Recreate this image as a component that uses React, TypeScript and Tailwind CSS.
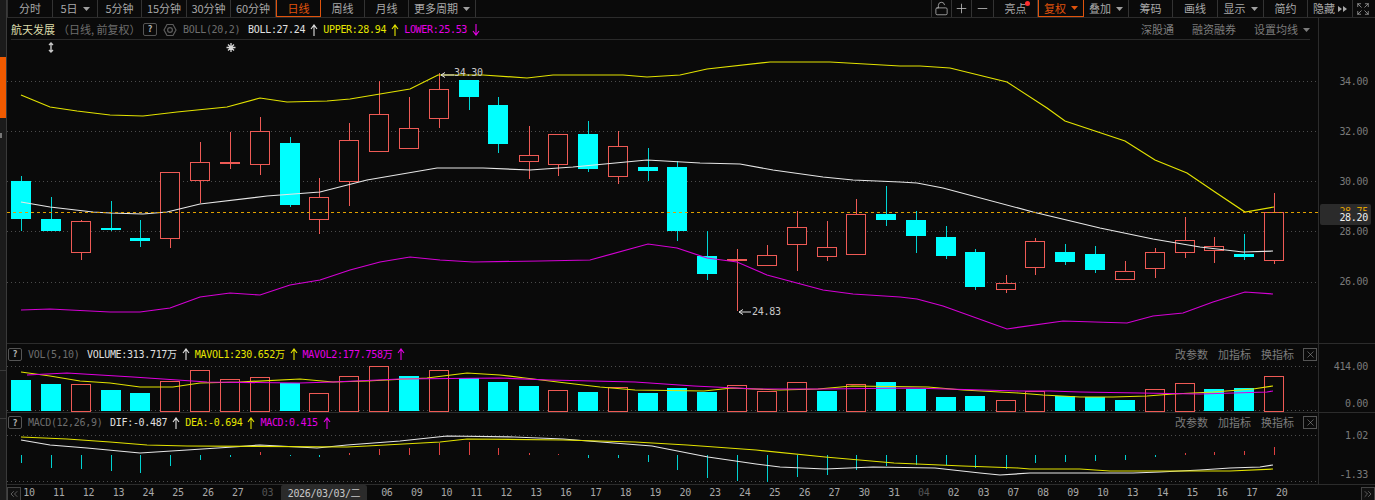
import { ChevronsLeft, ChevronsRight, Expand, LockOpen, Minus, Plus, X } from "lucide-react";

const CJK = "font-['Noto_Sans_CJK_SC','Noto_Sans',sans-serif]";
const MONO = "font-['DejaVu_Sans_Mono','Noto_Sans_CJK_SC',monospace] tracking-[-0.3px]";

const CYAN = "#00ffff";
const CYAN_DIM = "#00d4d4";
const RED = "#ee5a55";
const YELLOW = "#e2e200";
const WHITE = "#e6e6e6";
const MAGENTA = "#d400d4";

// x, body top, body bottom, wick top, wick bottom, up
type Candle = [number, number, number, number, number, boolean];
const candles: Candle[] = [
  [21, 181, 219, 176, 231, false],
  [51, 219, 231, 197, 231, false],
  [81, 221, 252, 220, 260, true],
  [111, 228, 229, 201, 231, false],
  [140, 238, 241, 220, 247, false],
  [170, 172, 238, 172, 248, true],
  [200, 162, 180, 142, 203, true],
  [230, 162, 163, 132, 169, true],
  [260, 131, 164, 117, 175, true],
  [290, 143, 205, 137, 207, false],
  [319, 197, 219, 178, 234, true],
  [349, 140, 181, 123, 206, true],
  [379, 114, 151, 81, 151, true],
  [409, 128, 148, 97, 148, true],
  [439, 89, 118, 73, 128, true],
  [469, 80, 97, 80, 110, false],
  [498, 105, 144, 97, 153, false],
  [529, 155, 161, 126, 179, true],
  [558, 134, 164, 134, 176, true],
  [588, 134, 169, 121, 172, false],
  [618, 146, 176, 131, 184, true],
  [648, 167, 171, 148, 181, false],
  [677, 167, 231, 161, 241, false],
  [707, 256, 274, 231, 280, false],
  [737, 259, 260, 249, 311, true],
  [767, 255, 265, 245, 265, true],
  [797, 227, 244, 211, 271, true],
  [827, 247, 256, 221, 261, true],
  [856, 214, 254, 199, 254, true],
  [886, 214, 220, 186, 226, false],
  [916, 220, 236, 211, 253, false],
  [946, 237, 256, 226, 259, false],
  [975, 252, 287, 249, 290, false],
  [1006, 283, 289, 275, 293, true],
  [1035, 241, 267, 238, 275, true],
  [1065, 252, 262, 244, 265, false],
  [1095, 254, 270, 246, 273, false],
  [1125, 271, 279, 261, 279, true],
  [1155, 252, 268, 248, 278, true],
  [1185, 240, 252, 217, 258, true],
  [1214, 246, 250, 237, 263, true],
  [1244, 254, 257, 234, 260, false],
  [1274, 212, 260, 193, 264, true],
];

const upperBand =
  "21,95 50,107 77,111 110,115 143,116 177,112 227,107 260,98 287,102 327,101 350,99 410,89 438,75 483,75 527,78 553,75 623,75 647,77 680,75 707,69 770,62 830,62 900,66 920,66 950,68 1007,82 1047,108 1065,121 1095,131 1125,141 1155,160 1187,173 1215,192 1245,212 1274,207";
const midBand =
  "21,202 50,207 93,212 110,213 143,214 167,212 200,204 267,196 320,192 367,180 437,168 483,168 530,170 573,167 647,160 700,163 740,164 773,170 823,177 853,180 900,182 917,183 943,188 1033,212 1100,228 1153,239 1200,247 1243,252 1273,251";
const lowerBand =
  "21,310 50,309 110,312 140,312 170,308 200,297 230,293 260,295 290,285 320,280 350,270 380,262 410,257 440,260 473,262 540,261 590,260 648,244 677,248 707,258 737,262 767,275 823,290 853,294 900,297 917,299 943,306 1007,329 1063,321 1127,323 1153,316 1183,313 1213,302 1245,292 1273,294";

const volTops = [
  380, 384, 384, 390, 393, 381, 370, 379, 377, 383, 393, 376, 366, 376, 370, 378, 382, 386, 390, 392, 387, 393,
  388, 392, 385, 391, 382, 391, 384, 382, 389, 397, 396, 400, 391, 396, 397, 400, 389, 383, 389, 388, 376,
];
// volume colours do not always follow the candle body
const volUp = [2, 5, 6, 7, 8, 10, 11, 12, 14, 18, 20, 24, 25, 26, 28, 33, 34, 38, 39, 42];
const vol1 =
  "21,372 50,376 80,381 110,383 140,387 173,387 200,383 240,382 300,379 333,382 367,381 427,378 467,373 500,375 525,378 566,383 600,387 635,390 704,391 732,388 780,390 818,389 852,386 928,387 963,390 1018,393 1043,395 1080,397 1113,397 1147,396 1173,394 1213,392 1253,389 1273,386";
const vol2 =
  "27,375 67,373 133,377 207,382 300,383 333,382 400,379 500,378 549,380 635,382 694,386 756,389 825,389 911,388 1018,391 1050,391 1080,392 1140,393 1200,394 1267,392 1273,391";

// bottom end of each MACD bar, bars above zero end at the zero line and start here instead
const macdEnds = [
  463, 468, 469, 471, 473, 466, 460, 457, 452, 456, 457, 453, 449, 448, 443, 442, 448, 453, 454, 458, 458, 462, 470,
  478, 481, 482, 477, 475, 470, 466, 465, 465, 468, 469, 463, 462, 461, 460, 457, 453, 452, 451, 447,
];
const macdUp = [8, 11, 12, 13, 14, 15, 16, 17, 18, 39, 40, 41, 42];
const dif =
  "21,440 50,445 87,448 140,453 187,450 233,447 260,445 317,448 347,445 400,441 447,436 514,437 563,439 601,442 652,446 708,457 756,464 780,467 825,469 873,467 935,468 980,473 1000,475 1030,473 1110,473 1133,473 1160,472 1200,470 1230,468 1260,467 1273,465";
const dea =
  "21,437 67,439 110,442 147,445 187,446 347,447 367,446 440,442 467,439 563,440 635,442 687,445 756,450 825,457 894,463 963,466 1018,468 1030,469 1080,469 1110,471 1230,471 1273,469";

const axisLabels = [
  "10", "11", "12", "13", "24", "25", "26", "27", "03", "", "", "", "06", "09", "10", "11", "12", "13", "16", "17", "18",
  "19", "20", "23", "24", "25", "26", "27", "30", "31", "04", "02", "03", "07", "08", "09", "10", "13", "14", "15", "16",
  "17", "20",
];

const leftTabs = [
  { label: "分时", w: "w-[45px]" },
  { label: "5日", w: "w-[45px]", caret: true },
  { label: "5分钟", w: "w-[44px]" },
  { label: "15分钟", w: "w-[45px]" },
  { label: "30分钟", w: "w-[44px]" },
  { label: "60分钟", w: "w-[45px]" },
  { label: "日线", w: "w-[45px]", active: true },
  { label: "周线", w: "w-[44px]" },
  { label: "月线", w: "w-[44px]" },
  { label: "更多周期", w: "w-[67px]", caret: true },
];

const rightTabs = [
  { label: "亮点", w: "w-[44px]", dot: true },
  { label: "复权", w: "w-[46px]", caret: true, active: true },
  { label: "叠加", w: "w-[45px]", caret: true },
  { label: "筹码", w: "w-[44px]" },
  { label: "画线", w: "w-[45px]" },
  { label: "显示", w: "w-[46px]", caret: true },
  { label: "简约", w: "w-[44px]" },
];

function Caret({ color = "#a0a0a0" }: { color?: string }) {
  return (
    <svg width="7" height="4" viewBox="0 0 7 4" className="ml-[5px] shrink-0">
      <path d="M0 0H7L3.5 4Z" fill={color} />
    </svg>
  );
}

function Tab({ label, w, caret, active, dot }: { label: string; w: string; caret?: boolean; active?: boolean; dot?: boolean }) {
  return (
    <div
      className={`relative flex h-[17px] items-center justify-center border-r text-[11px] ${w} ${
        active ? "border border-t-0 border-[#e0530c] text-[#e0530c]" : "border-[#333333] text-[#a8a8a8]"
      }`}
    >
      {label}
      {caret && <Caret color={active ? "#e0530c" : "#a0a0a0"} />}
      {dot && <span className="absolute right-[7px] top-[1px] h-[5px] w-[5px] rounded-full bg-[#ff3030]" />}
    </div>
  );
}

function Arrow({ color, down }: { color: string; down?: boolean }) {
  return (
    <svg width="8" height="12" viewBox="0 0 8 12" className={`mx-[5px] shrink-0 ${down ? "rotate-180" : ""}`}>
      <path d="M4 12V1M1 5L4 1L7 5" fill="none" stroke={color} strokeWidth="1.1" />
    </svg>
  );
}

function Help() {
  return (
    <span className="flex h-[13px] w-[14px] shrink-0 items-center justify-center rounded-[2px] border border-[#555555] text-[9px] font-bold text-[#b0b0b0]">
      ?
    </span>
  );
}

function Gear() {
  return (
    <svg width="14" height="14" viewBox="0 0 14 14" className="shrink-0">
      <path d="M4 1.5H10L13 7L10 12.5H4L1 7Z" fill="none" stroke="#5c5c5c" strokeWidth="1.2" />
      <circle cx="7" cy="7" r="2.4" fill="none" stroke="#5c5c5c" strokeWidth="1.2" />
    </svg>
  );
}

function Reading({ text, color, down }: { text: string; color: string; down?: boolean }) {
  return (
    <span className="flex items-center" style={{ color }}>
      <span className={`${MONO} text-[10px]`}>{text}</span>
      <Arrow color={color} down={down} />
    </span>
  );
}

function PanelActions() {
  return (
    <div className={`flex items-center gap-[10px] text-[11px] text-[#7c7c7c] ${CJK}`}>
      <span>改参数</span>
      <span>加指标</span>
      <span>换指标</span>
      <span className="ml-[-1px] flex h-[13px] w-[14px] items-center justify-center border border-[#555555]">
        <X size={11} strokeWidth={1.2} color="#9a9a9a" />
      </span>
    </div>
  );
}

function Dots({ y, x2 = 1320 }: { y: number; x2?: number }) {
  return <line x1="7" x2={x2} y1={y + 0.5} y2={y + 0.5} stroke="#4c4c4c" strokeDasharray="1 3" />;
}

function Line({ points, color }: { points: string; color: string }) {
  return <polyline points={points} fill="none" stroke={color} strokeWidth="1.2" />;
}

function Body({ x, top, bottom, up }: { x: number; top: number; bottom: number; up: boolean }) {
  if (up) return <rect x={x - 9.5} y={top + 0.5} width="19" height={Math.max(bottom - top, 1)} fill="#0a0a0a" stroke={RED} />;
  return <rect x={x - 10} y={top} width="20" height={Math.max(bottom - top, 2)} fill={CYAN} />;
}

function MainChart() {
  return (
    <svg width="1312" height="303" viewBox="7 40 1312 303" className="block">
      {[81, 131, 181, 231, 282].map((y) => (
        <Dots key={y} y={y} />
      ))}
      {candles.map(([x, top, bottom, wickTop, wickBottom, up]) => (
        <g key={x} shapeRendering="crispEdges">
          <line x1={x + 0.5} x2={x + 0.5} y1={wickTop} y2={wickBottom} stroke={up ? RED : CYAN_DIM} />
          <Body x={x} top={top} bottom={bottom} up={up} />
        </g>
      ))}
      <Line points={upperBand} color={YELLOW} />
      <Line points={midBand} color={WHITE} />
      <Line points={lowerBand} color={MAGENTA} />
      <line x1="7" x2="1320" y1="212.5" y2="212.5" stroke="#e0a000" strokeDasharray="3 3" shapeRendering="crispEdges" />

      <path d="M441 75H454M441 75L445 72.5M441 75L445 77.5" fill="none" stroke="#e0e0e0" />
      <text x="454" y="76" fontSize="10" fill="#c8c8c8" className={MONO}>
        34.30
      </text>
      <path d="M739 312H751M739 312L743 309.5M739 312L743 314.5" fill="none" stroke="#e0e0e0" />
      <text x="752" y="315" fontSize="10" fill="#c8c8c8" className={MONO}>
        24.83
      </text>

      <path d="M51 43V52M49 45L51 43L53 45M49 50L51 52L53 50" fill="none" stroke="#c8c8c8" strokeWidth="1.4" />
      <path d="M231 43V52M226.5 47.5H235.5M228 44.5L234 50.5M234 44.5L228 50.5" fill="none" stroke="#d8d8d8" strokeWidth="1.3" />
    </svg>
  );
}

function VolumeChart() {
  return (
    <svg width="1312" height="48" viewBox="7 364 1312 48" className="block">
      <Dots y={366} />
      <Dots y={410} />
      {candles.map(([x], i) => (
        <g key={x} shapeRendering="crispEdges">
          {volUp.includes(i) ? (
            <rect x={x - 9.5} y={volTops[i] + 0.5} width="19" height={410.5 - volTops[i]} fill="#0a0a0a" stroke={RED} />
          ) : (
            <rect x={x - 10} y={volTops[i]} width="20" height={411 - volTops[i]} fill={CYAN} />
          )}
        </g>
      ))}
      <Line points={vol1} color={YELLOW} />
      <Line points={vol2} color="#e000e0" />
    </svg>
  );
}

function MacdChart() {
  const zero = 455;
  return (
    <svg width="1312" height="52" viewBox="7 432 1312 52" className="block">
      <Dots y={435} />
      <Dots y={481} />
      {candles.map(([x], i) => {
        const up = macdUp.includes(i);
        return (
          <line
            key={x}
            x1={x + 0.5}
            x2={x + 0.5}
            y1={up ? macdEnds[i] : zero}
            y2={up ? zero : macdEnds[i]}
            stroke={up ? "#e04040" : "#00d0d0"}
            strokeWidth="1"
            shapeRendering="crispEdges"
          />
        );
      })}
      <Line points={dif} color={WHITE} />
      <Line points={dea} color={YELLOW} />
    </svg>
  );
}

function AxisValue({ children, className = "" }: { children: string; className?: string }) {
  return <div className={`${MONO} text-right text-[10px] text-[#7a7a7a] ${className}`}>{children}</div>;
}

export default function App() {
  return (
    <div className={`flex h-[500px] w-[1375px] overflow-hidden bg-[#0a0a0a] ${CJK}`}>
      <aside className="flex h-full w-[7px] shrink-0 flex-col border-r border-[#3a3a3a] bg-[#1b1b1b]">
        <div className="mt-[57px] h-[61px] w-[6px] bg-[#f05a00]" />
        <div className="mt-[15px] h-[5px] w-[2px] bg-[#777777]" />
        <div className="mt-[232px] h-px w-full bg-[#3a3a3a]" />
        <div className="mt-[47px] h-px w-full bg-[#3a3a3a]" />
      </aside>

      <div className="flex w-[1368px] flex-col">
        <header className="flex h-[18px] shrink-0 items-start justify-between border-b border-[#2c2c2c] pr-[2px]">
          <nav className="flex border-l border-[#333333]">
            {leftTabs.map((tab) => (
              <Tab key={tab.label} {...tab} />
            ))}
          </nav>
          <nav className="flex border-l border-[#333333]">
            <div className="flex h-[17px] w-[20px] items-center justify-center border-r border-[#333333]">
              <LockOpen size={15} strokeWidth={1.3} color="#b4b4b4" />
            </div>
            <div className="flex h-[17px] w-[20px] items-center justify-center border-r border-[#333333]">
              <Plus size={15} strokeWidth={1.3} color="#c0c0c0" />
            </div>
            <div className="flex h-[17px] w-[22px] items-center justify-center border-r border-[#333333]">
              <Minus size={15} strokeWidth={1.3} color="#c0c0c0" />
            </div>
            {rightTabs.map((tab) => (
              <Tab key={tab.label} {...tab} />
            ))}
            <div className="flex h-[17px] w-[45px] items-center justify-center gap-[3px] border-r border-[#333333] text-[11px] text-[#a8a8a8]">
              隐藏
              <svg width="9" height="6" viewBox="0 0 9 6">
                <path d="M0 0L4 3L0 6ZM5 0L9 3L5 6Z" fill="#a8a8a8" />
              </svg>
            </div>
            <div className="flex h-[17px] w-[20px] items-center justify-center">
              <Expand size={14} strokeWidth={1.2} color="#b4b4b4" />
            </div>
          </nav>
        </header>

        <section className="flex h-[325px] shrink-0">
          <div className="w-[1312px] border-r border-[#2c2c2c]">
            <div className="mx-[4px] flex h-[22px] w-[1299px] items-center border-b border-[#2a2a2a] pt-[2px]">
              <span className="text-[11px] text-[#dcdcaa]">航天发展</span>
              <span className="ml-[3px] w-[79px] whitespace-nowrap text-[11px] text-[#6e6e6e]">（日线, 前复权）</span>
              <span className="ml-[6px] flex gap-[6px]">
                <Help />
                <Gear />
              </span>
              <span className={`${MONO} ml-[6px] w-[65px] text-[10px] text-[#6e6e6e]`}>BOLL(20,2)</span>
              <Reading text="BOLL:27.24" color="#e0e0e0" />
              <Reading text="UPPER:28.94" color="#e6e600" />
              <Reading text="LOWER:25.53" color="#e600e6" down />
              <span className="ml-auto flex items-center gap-[18px] text-[11px] text-[#7c7c7c]">
                <span>深股通</span>
                <span>融资融券</span>
                <span className="flex items-center">
                  设置均线
                  <Caret color="#7c7c7c" />
                </span>
              </span>
            </div>
            <MainChart />
          </div>
          <div className="relative w-[56px] pr-[7px] pt-[39px]">
            {["34.00", "32.00", "30.00", "28.00", "26.00"].map((v) => (
              <AxisValue key={v} className="h-[50px] leading-[50px]">
                {v}
              </AxisValue>
            ))}
            <div className={`${MONO} absolute left-[1px] top-[186px] h-[21px] w-[51px] rounded-[2px] bg-[#2b2b2b] pr-[3px] text-right text-[10px]`}>
              <div className="h-[7px] overflow-hidden pt-[3px] leading-[10px] text-[#e0a000]">28.75</div>
              <div className="mt-[1px] leading-[12px] text-[#f0f0f0]">28.20</div>
            </div>
          </div>
        </section>

        <section className="flex h-[69px] shrink-0 border-t border-[#2c2c2c]">
          <div className="w-[1312px] border-r border-[#2c2c2c]">
            <div className="flex h-[20px] items-center pl-px pr-[1px]">
              <Help />
              <span className={`${MONO} ml-[6px] w-[59px] text-[10px] text-[#6e6e6e]`}>VOL(5,10)</span>
              <Reading text="VOLUME:313.717万" color="#e0e0e0" />
              <Reading text="MAVOL1:230.652万" color="#e6e600" />
              <Reading text="MAVOL2:177.758万" color="#e600e6" />
              <span className="ml-auto">
                <PanelActions />
              </span>
            </div>
            <VolumeChart />
          </div>
          <div className="w-[56px] pr-[7px] pt-[17px]">
            <AxisValue className="leading-[12px]">414.00</AxisValue>
            <AxisValue className="mt-[25px] leading-[12px]">0.00</AxisValue>
          </div>
        </section>

        <section className="flex h-[72px] shrink-0 border-t border-[#2c2c2c]">
          <div className="w-[1312px] border-r border-[#2c2c2c]">
            <div className="flex h-[19px] items-center pl-px pr-[1px]">
              <Help />
              <span className={`${MONO} ml-[6px] w-[82px] text-[10px] text-[#6e6e6e]`}>MACD(12,26,9)</span>
              <Reading text="DIF:-0.487" color="#e0e0e0" />
              <Reading text="DEA:-0.694" color="#e6e600" />
              <Reading text="MACD:0.415" color="#e600e6" />
              <span className="ml-auto">
                <PanelActions />
              </span>
            </div>
            <MacdChart />
          </div>
          <div className="w-[56px] pr-[7px] pt-[17px]">
            <AxisValue className="leading-[12px]">1.02</AxisValue>
            <AxisValue className="mt-[27px] leading-[12px]">-1.33</AxisValue>
          </div>
        </section>

        <footer className="relative flex h-[16px] shrink-0 items-center border-t border-[#2c2c2c] pl-[7px]">
          {axisLabels.map((label, i) => (
            <span
              key={i}
              className={`${MONO} w-[29.83px] shrink-0 text-center text-[10px] ${
                i === 8 || i === 30 ? "text-[#555555]" : "text-[#a8a8a8]"
              }`}
            >
              {label}
            </span>
          ))}
          <span className="absolute left-0 top-[2px] flex h-[14px] w-[14px] items-center justify-center border border-[#444444] bg-[#111111]">
            <ChevronsLeft size={12} strokeWidth={1} color="#a8a8a8" />
          </span>
          <span className={`${MONO} absolute left-[274px] top-0 flex h-[16px] w-[86px] items-center justify-center rounded-t-[2px] bg-[#2b2b2b] text-[10px] text-[#c8c8c8]`}>
            2026/03/03/二
          </span>
          <span className="absolute right-0 top-[2px] flex h-[14px] w-[14px] items-center justify-center border border-[#444444] bg-[#111111]">
            <ChevronsRight size={12} strokeWidth={1} color="#a8a8a8" />
          </span>
        </footer>
      </div>
    </div>
  );
}
